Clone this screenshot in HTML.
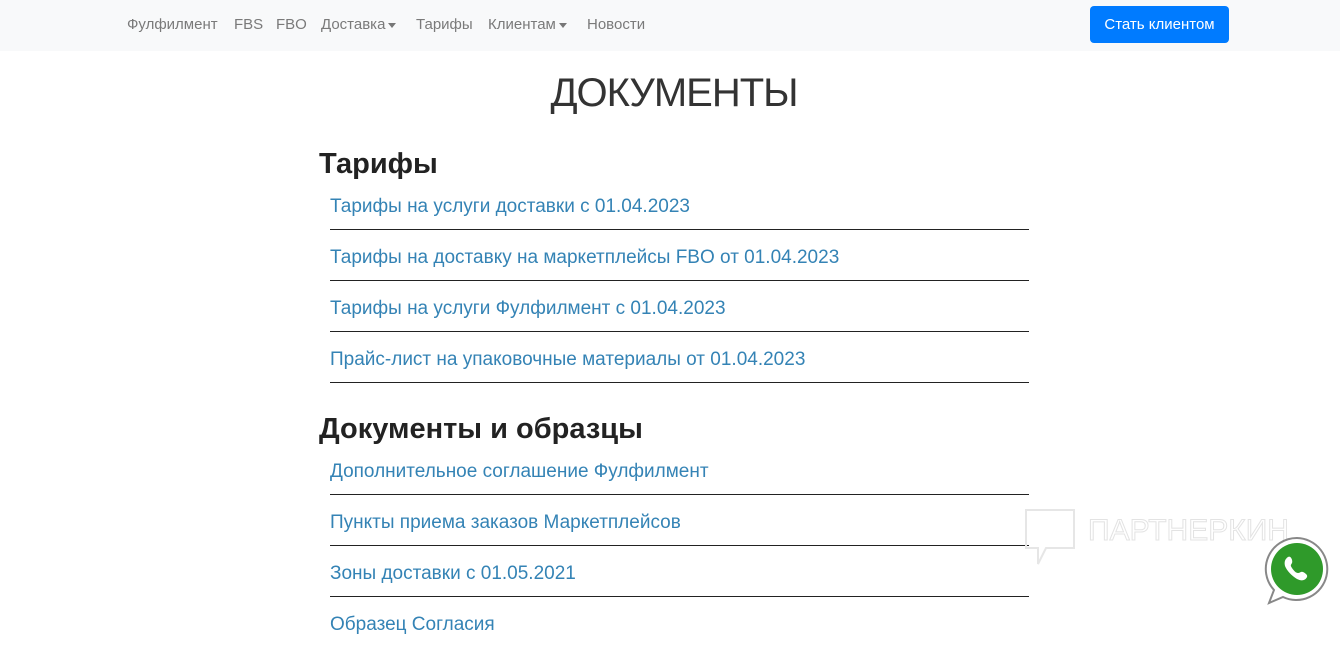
<!DOCTYPE html>
<html><head><meta charset="utf-8"><style>
body{margin:0;width:1340px;height:617px;overflow:hidden;background:#fff;font-family:"Liberation Sans",sans-serif;position:relative}
.nav{position:absolute;left:0;top:0;width:1340px;height:51px;background:#f8f9fa}
.nav a{position:absolute;top:16px;font-size:15px;color:#7a7a7a}
.car{display:inline-block;border-top:5px solid #777;border-left:4px solid transparent;border-right:4px solid transparent;vertical-align:middle;margin-left:3px}
.btn{position:absolute;left:1090px;top:6px;width:139px;height:37px;background:#007bff;border-radius:4px;color:#fff;font-size:15px;line-height:37px;text-align:center}
h1{position:absolute;top:71px;left:0;width:1348px;text-align:center;margin:0;font-weight:300;font-size:40px;color:#333;letter-spacing:-1px}
h2{position:absolute;left:319px;margin:0;font-size:29px;font-weight:bold;color:#222}
.l{position:absolute;left:330px;width:699px;height:50px;border-bottom:1.5px solid #222;font-size:19px;color:#3483b5;box-sizing:border-box}
.l span{position:absolute;top:16px;left:0}
</style></head><body>
<div class="nav">
<a style="left:127px">Фулфилмент</a><a style="left:234px">FBS</a><a style="left:276px">FBO</a>
<a style="left:321px">Доставка<span class="car"></span></a><a style="left:416px">Тарифы</a>
<a style="left:488px">Клиентам<span class="car"></span></a><a style="left:587px">Новости</a>
<div class="btn">Стать клиентом</div>
</div>
<h1>ДОКУМЕНТЫ</h1>
<h2 style="top:148px">Тарифы</h2>
<div class="l" style="top:180px"><span>Тарифы на услуги доставки с 01.04.2023</span></div>
<div class="l" style="top:231px"><span>Тарифы на доставку на маркетплейсы FBO от 01.04.2023</span></div>
<div class="l" style="top:282px"><span>Тарифы на услуги Фулфилмент с 01.04.2023</span></div>
<div class="l" style="top:333px"><span>Прайс-лист на упаковочные материалы от 01.04.2023</span></div>
<h2 style="top:413px">Документы и образцы</h2>
<div class="l" style="top:445px"><span>Дополнительное соглашение Фулфилмент</span></div>
<div class="l" style="top:496px"><span>Пункты приема заказов Маркетплейсов</span></div>
<div class="l" style="top:547px"><span>Зоны доставки с 01.05.2021</span></div>
<div class="l" style="top:598px;border:none"><span>Образец Согласия</span></div>
<svg style="position:absolute;left:1024px;top:508px" width="270" height="60">
<path d="M2 2h48v38h-28l-8 16v-16h-12z" fill="none" stroke="#e6e6e6" stroke-width="2"/>
<text x="64" y="32" font-size="30" fill="none" stroke="#e3e3e3" font-family="Liberation Sans">ПАРТНЕРКИН</text>
</svg>
<svg style="position:absolute;left:1262px;top:535px" width="70" height="72" viewBox="0 0 70 72">
<path d="M35 3a31 31 0 1 1-14 59l-14 6 5-13A31 31 0 0 1 35 3z" fill="#fff" stroke="#888" stroke-width="2"/>
<circle cx="35" cy="34" r="26" fill="#2f9a2a"/>
<path d="M26 22c3-2 5 4 4 6-1 2-2 2 0 5s4 5 6 5 3-2 5-1 5 3 4 5c-2 4-6 4-10 2-5-3-10-8-12-13-1-4 0-7 3-9z" fill="#fff"/>
</svg>
</body></html>
